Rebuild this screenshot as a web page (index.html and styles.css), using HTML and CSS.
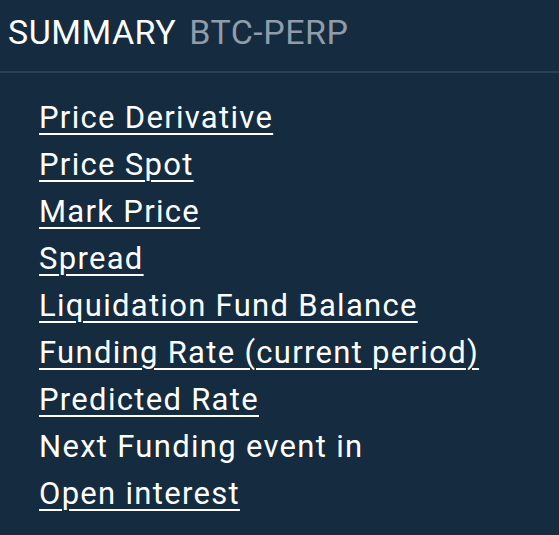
FILE: index.html
```html
<!DOCTYPE html>
<html>
<head>
<meta charset="utf-8">
<link rel="stylesheet" href="styles.css">
</head>
<body>
<div class="panel">
  <div class="header">
    <span class="title">SUMMARY</span>
    <span class="market">BTC-PERP</span>
  </div>
  <ul class="list">
    <li><a href="#">Price Derivative</a></li>
    <li><a href="#">Price Spot</a></li>
    <li><a href="#">Mark Price</a></li>
    <li><a href="#">Spread</a></li>
    <li><a href="#">Liquidation Fund Balance</a></li>
    <li><a href="#">Funding Rate (current period)</a></li>
    <li><a href="#">Predicted Rate</a></li>
    <li><span>Next Funding event in</span></li>
    <li><a href="#">Open interest</a></li>
  </ul>
</div>
</body>
</html>
```
FILE: styles.css
```css
html, body {
  margin: 0;
  padding: 0;
  background: #142b40;
}
body {
  width: 559px;
  height: 535px;
  overflow: hidden;
  font-family: Roboto, "Liberation Sans", sans-serif;
  color: #ffffff;
}
.header {
  display: flex;
  align-items: baseline;
  gap: 13px;
  padding: 0 8px;
  height: 71px;
  border-bottom: 2px solid #2c3e51;
  box-sizing: content-box;
}
.title {
  font-size: 34px;
  line-height: 64px;
  letter-spacing: 0.5px;
  color: #ffffff;
}
.market {
  font-size: 34px;
  line-height: 64px;
  letter-spacing: 0.5px;
  color: #8f9ca9;
}
.list {
  list-style: none;
  margin: 0;
  padding: 21px 0 0 39px;
}
.list li {
  font-size: 31px;
  line-height: 47px;
  letter-spacing: 1.3px;
}
.list a {
  color: #ffffff;
  text-decoration: underline;
  text-decoration-thickness: 2px;
  text-underline-offset: 5px;
}
```
